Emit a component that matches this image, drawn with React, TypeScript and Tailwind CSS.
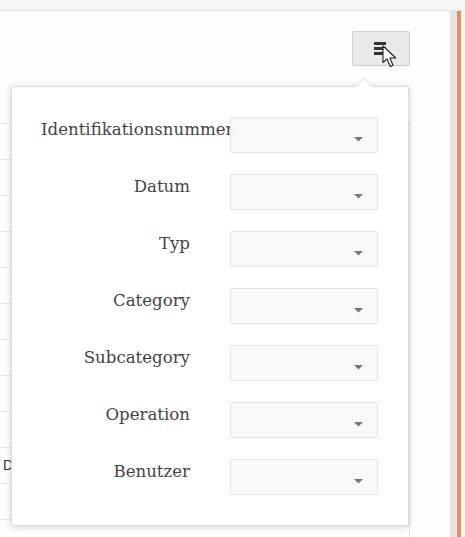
const fields = ['Identifikationsnummer', 'Datum', 'Typ', 'Category', 'Subcategory', 'Operation', 'Benutzer'];

const rows = Array(12).fill(0);

const SelectBox = () => (
  <div className="relative h-[36px] w-[148px] shrink-0 rounded-[2px] border border-[#e3e3e3] bg-[#f9f9f9]">
    <svg className="absolute right-[14px] top-[19px]" width="9" height="5" viewBox="0 0 9 5">
      <polygon points="0,0 9,0 4.5,4.5" fill="#777" />
    </svg>
  </div>
);

const App = () => {
  return (
    <div className="relative h-[537px] w-[465px] overflow-hidden bg-[#f5f5f5] font-['Liberation_Sans',sans-serif]">
      <div className="h-[11px] border-b border-[#e2e2e2] bg-[#f6f6f6]" />
      <div className="flex h-[526px]">
        {/* page content behind the popover */}
        <div className="flex-1 bg-[#fdfdfd] pr-[40px]">
          <div className="flex justify-end pt-[20px]">
            <button className="relative flex h-[35px] w-[58px] items-center justify-center rounded-[2px] border border-[#cfcfcf] bg-[#e9e9e9]">
              <span className="mr-[2px] flex flex-col gap-[2px]">
                <span className="block h-[3px] w-[12px] bg-[#333]" />
                <span className="block h-[3px] w-[12px] bg-[#333]" />
                <span className="block h-[3px] w-[12px] bg-[#333]" />
              </span>
              <svg className="absolute left-[29px] top-[13px]" width="16" height="23" viewBox="0 0 16 23">
                <polygon
                  points="1,1 1,17.5 5,13.8 8.3,21.5 11,20.3 7.9,13 13.8,13"
                  fill="#fff"
                  stroke="#222"
                  strokeWidth="1.1"
                  strokeLinejoin="round"
                />
              </svg>
            </button>
          </div>
          <div className="mt-[57px] border-r border-[#e3e3e3]">
            {rows.map((_, i) => (
              <div key={i} className="flex h-[36px] items-center border-t border-[#e6e6e6] pl-[3px] text-[14px] text-[#333]">
                {i === 9 ? 'Dateiimport' : ''}
              </div>
            ))}
          </div>
        </div>
        <div className="w-[7px] bg-[#e4e4e4]" />
        <div className="w-[4px] bg-[#ef8b62]" />
        <div className="w-[4px] bg-[#f7f7f7]" />
      </div>

      {/* column chooser popover */}
      <div className="absolute left-[11px] top-[86px] w-[398px] rounded-[2px] border border-[#dcdcdc] bg-white px-[29px] py-[30px] shadow-[0_1px_6px_rgba(0,0,0,0.18)]">
        <div className="absolute left-[343px] top-[-9px] h-0 w-0 border-x-[9px] border-b-[9px] border-x-transparent border-b-[#dcdcdc]" />
        <div className="absolute left-[344px] top-[-8px] h-0 w-0 border-x-[8px] border-b-[8px] border-x-transparent border-b-white" />
        <div className="flex flex-col gap-[21px]">
          {fields.map((f) => (
            <div key={f} className="flex items-start gap-[40px]">
              <div className="w-[149px] shrink-0 whitespace-nowrap pt-[2px] text-right font-['DejaVu_Serif',serif] text-[16.6px] leading-[22px] text-[#444]">
                {f}
              </div>
              <SelectBox />
            </div>
          ))}
        </div>
      </div>
    </div>
  );
};

export default App;
